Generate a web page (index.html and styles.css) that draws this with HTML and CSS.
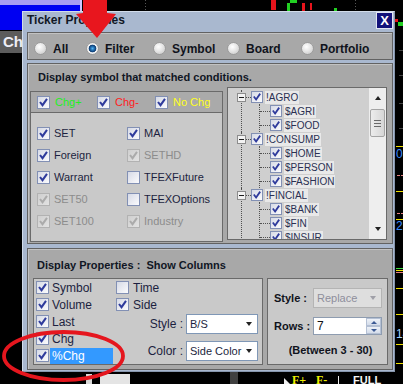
FILE: index.html
```html
<!DOCTYPE html>
<html>
<head>
<meta charset="utf-8">
<title>Ticker Properties</title>
<link rel="stylesheet" href="styles.css">
</head>
<body>
<div class="desk">
  <svg class="bg" width="403" height="384" viewBox="0 0 403 384">
    <rect x="0" y="0" width="81" height="5" fill="#a99cf2"/>
    <rect x="80" y="0" width="2" height="30" fill="#cfc6ff"/>
    <rect x="0" y="5" width="80" height="25" fill="#0000f2"/>
    <rect x="0" y="31" width="22" height="22" fill="#5c5c5c"/>
    <text x="3" y="47" font-family="Liberation Sans, Arial, sans-serif" font-weight="bold" font-size="15" fill="#eeeef6">Ch</text>
    <line x1="145.5" y1="0" x2="145.5" y2="11" stroke="#555" stroke-dasharray="1 2"/>
    <line x1="355.5" y1="0" x2="355.5" y2="11" stroke="#555" stroke-dasharray="1 2"/>
    <rect x="271" y="0" width="5" height="10" fill="#e8141c"/>
    <rect x="287" y="3" width="3" height="8" fill="#22d022"/>
    <rect x="290" y="0" width="7" height="3" fill="#22d022"/>
    <rect x="302" y="3" width="3" height="8" fill="#e8141c"/>
    <rect x="310" y="3" width="2" height="7" fill="#e8141c"/>
    <rect x="334" y="8" width="3" height="3" fill="#22d022"/>
    <rect x="395" y="19" width="3" height="3" fill="#e8141c"/>
    <rect x="398" y="22" width="5" height="4" fill="#22d022"/>
    <g fill="#444">
      <rect x="399" y="50" width="4" height="1"/>
      <rect x="399" y="75" width="4" height="1"/>
      <rect x="399" y="103" width="4" height="1"/>
      <rect x="399" y="128" width="4" height="1"/>
    </g>
    <g fill="#f0e000">
      <rect x="396" y="146" width="7" height="1"/>
      <rect x="396" y="191" width="7" height="1"/>
      <rect x="396" y="219" width="7" height="1"/>
      <rect x="396" y="270" width="7" height="1"/>
      <rect x="396" y="288" width="7" height="1"/>
      <rect x="396" y="314" width="7" height="1"/>
      <rect x="396" y="344" width="7" height="1"/>
      <rect x="396" y="363" width="7" height="1"/>
    </g>
    <g fill="#e88080">
      <rect x="397" y="175" width="3" height="1"/>
      <rect x="401" y="175" width="2" height="1"/>
      <rect x="397" y="213" width="3" height="1"/>
      <rect x="401" y="213" width="2" height="1"/>
      <rect x="396" y="272" width="7" height="1"/>
    </g>
    <rect x="396" y="268" width="7" height="1" fill="#40e040"/>
    <text x="396" y="158" font-family="Liberation Sans, Arial, sans-serif" font-size="12" fill="#3a8cff">0</text>
    <text x="396" y="230" font-family="Liberation Sans, Arial, sans-serif" font-size="12" fill="#3a8cff">2,</text>
    <text x="396" y="338" font-family="Liberation Sans, Arial, sans-serif" font-size="12" fill="#a0d0ff">14</text>
    <rect x="86" y="374" width="6" height="10" fill="#d8d8d8"/>
    <rect x="100" y="374" width="30" height="10" fill="#e4e4e4"/>
    <rect x="230" y="372" width="8" height="12" fill="#404040"/>
    <polygon points="284,378 290,384 284,384" fill="#f0f0f0"/>
    <text x="292" y="384" font-family="Liberation Serif, serif" font-weight="bold" font-size="12" fill="#f0f000">F+</text>
    <text x="316" y="384" font-family="Liberation Serif, serif" font-weight="bold" font-size="12" fill="#f0f000">F-</text>
    <rect x="338" y="376" width="1" height="8" fill="#f0f0f0"/>
    <text x="353" y="384" font-family="Liberation Sans, Arial, sans-serif" font-weight="bold" font-size="11" fill="#f4f4f4">FULL</text>
  </svg>

  <div class="dlg">
    <div class="titlebar">
      <span class="ttl">Ticker Properties</span>
      <span class="close">X</span>
    </div>
    <div class="dbody">
      <div class="grp radios">
        <div class="rad"><span class="rb"></span>All</div>
        <div class="rad"><span class="rb on"></span>Filter</div>
        <div class="rad"><span class="rb"></span>Symbol</div>
        <div class="rad"><span class="rb"></span>Board</div>
        <div class="rad"><span class="rb"></span>Portfolio</div>
      </div>

      <div class="grp g2">
        <div class="gtitle">Display symbol that matched conditions.</div>
        <div class="g2row">
          <div class="lcol">
            <div class="chgbox">
              <div class="ci w60"><span class="cb on"></span><span class="green">Chg+</span></div>
              <div class="ci w58"><span class="cb on"></span><span class="red">Chg-</span></div>
              <div class="ci"><span class="cb on"></span><span class="yellow">No Chg</span></div>
            </div>
            <div class="fbox">
              <div class="fi"><span class="cb on"></span>SET</div>
              <div class="fi"><span class="cb on"></span>MAI</div>
              <div class="fi"><span class="cb on"></span>Foreign</div>
              <div class="fi dis"><span class="cb on"></span>SETHD</div>
              <div class="fi"><span class="cb on"></span>Warrant</div>
              <div class="fi"><span class="cb"></span>TFEXFuture</div>
              <div class="fi dis"><span class="cb on"></span>SET50</div>
              <div class="fi"><span class="cb"></span>TFEXOptions</div>
              <div class="fi dis"><span class="cb on"></span>SET100</div>
              <div class="fi dis"><span class="cb on"></span>Industry</div>
            </div>
          </div>
          <div class="tree">
            <div class="tc">
              <div class="pnode">
                <div class="prow"><span class="exp"></span><span class="hl"></span><span class="cb on"></span><span class="lbl">!AGRO</span></div>
                <div class="kids">
                  <div class="krow"><span class="hl"></span><span class="cb on"></span><span class="lbl">$AGRI</span></div>
                  <div class="krow"><span class="hl"></span><span class="cb on"></span><span class="lbl">$FOOD</span></div>
                </div>
              </div>
              <div class="pnode">
                <div class="prow"><span class="exp"></span><span class="hl"></span><span class="cb on"></span><span class="lbl">!CONSUMP</span></div>
                <div class="kids">
                  <div class="krow"><span class="hl"></span><span class="cb on"></span><span class="lbl">$HOME</span></div>
                  <div class="krow"><span class="hl"></span><span class="cb on"></span><span class="lbl">$PERSON</span></div>
                  <div class="krow"><span class="hl"></span><span class="cb on"></span><span class="lbl">$FASHION</span></div>
                </div>
              </div>
              <div class="pnode">
                <div class="prow"><span class="exp"></span><span class="hl"></span><span class="cb on"></span><span class="lbl">!FINCIAL</span></div>
                <div class="kids">
                  <div class="krow"><span class="hl"></span><span class="cb on"></span><span class="lbl">$BANK</span></div>
                  <div class="krow"><span class="hl"></span><span class="cb on"></span><span class="lbl">$FIN</span></div>
                  <div class="krow"><span class="hl"></span><span class="cb on"></span><span class="lbl">$INSUR</span></div>
                </div>
              </div>
            </div>
            <div class="sbar">
              <div class="sbtn"><span class="tri up"></span></div>
              <div class="thumb"><span class="grip"></span><span class="grip"></span><span class="grip"></span></div>
              <div class="strack"></div>
              <div class="sbtn"><span class="tri down"></span></div>
            </div>
          </div>
        </div>
      </div>

      <div class="grp g3">
        <div class="gtitle">Display Properties :&nbsp;&nbsp;Show Columns</div>
        <div class="g3row">
          <div class="pbox">
            <div class="colA">
              <div class="pi"><span class="cb on"></span><span class="pl">Symbol</span></div>
              <div class="pi"><span class="cb on"></span><span class="pl">Volume</span></div>
              <div class="pi"><span class="cb on"></span><span class="pl">Last</span></div>
              <div class="pi"><span class="cb on"></span><span class="pl">Chg</span></div>
              <div class="pi"><span class="cb on"></span><span class="pl hi">%Chg</span></div>
            </div>
            <div class="colB">
              <div class="pi"><span class="cb"></span><span class="pl2">Time</span></div>
              <div class="pi"><span class="cb on"></span><span class="pl2">Side</span></div>
              <div class="srow first"><span class="flbl">Style :</span><div class="sel"><span class="sv">B/S</span><span class="tri down"></span></div></div>
              <div class="srow second"><span class="flbl">Color :</span><div class="sel"><span class="sv">Side Color</span><span class="tri down"></span></div></div>
            </div>
          </div>
          <div class="sbox">
            <div class="srow2"><span class="slbl">Style :</span><div class="sel dsel"><span class="sv">Replace</span><span class="tri down"></span></div></div>
            <div class="srow2 rows"><span class="slbl">Rows :</span><div class="spin"><span class="sv">7</span><span class="spbtns"><span class="spb"><span class="tri up"></span></span><span class="spb"><span class="tri down"></span></span></span></div></div>
            <div class="between">(Between 3 - 30)</div>
          </div>
        </div>
      </div>
    </div>
  </div>

  <svg class="ann" width="403" height="384" viewBox="0 0 403 384">
    <polygon points="83,0 107,0 107,13 116,14 97,38 76,14 83,13" fill="#e8161e"/>
    <ellipse cx="63.5" cy="356" rx="59.5" ry="24" fill="none" stroke="#e5161e" stroke-width="3.8"/>
  </svg>
</div>
</body>
</html>
```

FILE: styles.css
```css
* { box-sizing: border-box; }
html, body { margin: 0; padding: 0; background: #000; }
body { width: 403px; height: 384px; overflow: hidden; font-family: "Liberation Sans", Arial, sans-serif; }

.desk { position: relative; width: 403px; height: 384px; overflow: hidden; background: #000; }
.bg { position: absolute; left: 0; top: 0; }
.ann { position: absolute; left: 0; top: 0; pointer-events: none; }

/* dialog window */
.dlg {
  position: absolute; left: 22px; top: 11px; width: 373px; height: 361px;
  background: #a9b8cf;
  border: 1px solid; border-color: #d2dcea #8796ad #8796ad #d2dcea;
  display: flex; flex-direction: column;
}
.titlebar { height: 20px; flex: none; display: flex; align-items: flex-start; padding-left: 4px; }
.ttl { font-weight: bold; font-size: 12px; line-height: 16px; color: #111826; }
.close {
  margin-left: auto; margin-right: 1px; width: 17px; height: 17px;
  background: #12127a; border: 1px solid #e2e6f2; color: #fff;
  font-weight: bold; font-size: 13px; line-height: 1;
  display: flex; align-items: center; justify-content: center;
}
.dbody { flex: 1; display: flex; flex-direction: column; padding: 0 1px 0 4px; }

.grp { border: 1px solid #626262; background: #a8a8a8; box-shadow: inset 1px 1px 0 #c2c2c2; flex: none; }

/* radios */
.radios {
  height: 28px; padding: 5px 0 0 6px;
  display: grid; grid-template-columns: 52px 67px 74px 74px auto; align-items: center;
}
.rad { display: flex; align-items: center; gap: 6px; font-weight: bold; font-size: 12px; color: #10131c; }
.rb {
  width: 13px; height: 13px; border-radius: 50%; flex: none;
  border: 1px solid #9c9c9c;
  background: radial-gradient(circle at 40% 35%, #ffffff 0, #e6e6e6 45%, #c2c2c2 100%);
}
.rb.on {
  background: radial-gradient(circle at 50% 50%, #58b8f0 0, #2a7cc0 1.5px, #0c3a70 3.5px, #f4f4f4 4.2px, #d6d6d6 100%);
}

/* checkboxes */
.cb {
  width: 13px; height: 13px; flex: none;
  border: 1px solid #8290b4;
  background: linear-gradient(135deg, #d6dae6, #fbfbfd);
}
.cb.on {
  background-image: url("data:image/svg+xml,%3Csvg xmlns='http://www.w3.org/2000/svg' width='11' height='11' viewBox='0 0 11 11'%3E%3Cpath d='M2 5 L4.5 8.2 L9 1.8' fill='none' stroke='%232f3b9c' stroke-width='2'/%3E%3C/svg%3E"), linear-gradient(135deg, #d6dae6, #fbfbfd);
  background-size: 100% 100%, 100% 100%;
  background-repeat: no-repeat;
}
.dis .cb { border-color: #b2b2b2; background: #d2d2d2; }
.dis .cb.on {
  background-image: url("data:image/svg+xml,%3Csvg xmlns='http://www.w3.org/2000/svg' width='11' height='11' viewBox='0 0 11 11'%3E%3Cpath d='M2 5 L4.5 8.2 L9 1.8' fill='none' stroke='%23ababab' stroke-width='2'/%3E%3C/svg%3E"), linear-gradient(135deg, #cfcfcf, #e2e2e2);
  background-size: 100% 100%, 100% 100%;
}

/* group 2 */
.g2 { height: 181px; margin-top: 3px; display: flex; flex-direction: column; }
.gtitle {
  height: 23px; padding: 3px 0 0 10px; flex: none;
  display: flex; align-items: center;
  font-weight: bold; font-size: 11px; color: #101624;
}
.g2row { display: flex; align-items: flex-start; gap: 4px; padding-left: 2px; }
.lcol { width: 193px; margin-top: 4px; display: flex; flex-direction: column; }
.chgbox {
  height: 22px; border: 1px solid #6a6a6a; background: #aaaaaa;
  display: flex; align-items: center; padding-left: 6px;
}
.ci { display: flex; align-items: center; gap: 5px; font-size: 11px; }
.w60 { width: 60px; }
.w58 { width: 58px; }
.green { color: #22f022; }
.red { color: #ff2020; }
.yellow { color: #ffff20; }

.fbox {
  height: 129px; border: 1px solid #6a6a6a; border-top: 0; background: #c9c9c9;
  padding: 9px 0 0 6px;
  display: grid; grid-template-columns: 90px auto; grid-auto-rows: 22px; align-items: center;
}
.fi { display: flex; align-items: center; gap: 4px; font-size: 11px; color: #1c1f40; }
.fi.dis { color: #8c8c8c; }

/* tree */
.tree {
  width: 160px; height: 153px; border: 1px solid #6a6a6a; background: #cfcfcf;
  display: flex;
}
.tc { flex: 1; padding-top: 2px; overflow: hidden; font-size: 10px; color: #2a3052; }
.pnode { margin-left: 13px; border-left: 1px dotted #505050; }
.prow { height: 14px; display: flex; align-items: center; margin-left: -5px; }
.exp {
  width: 9px; height: 9px; flex: none; border: 1px solid #8c8c8c; background: #f2f2f2;
  display: flex; align-items: center; justify-content: center;
}
.exp::after { content: ""; width: 5px; height: 1px; background: #1a1a1a; }
.hl { width: 5px; flex: none; border-top: 1px dotted #505050; }
.tree .cb { width: 12px; height: 12px; }
.lbl { background: #e9e9e9; padding: 0 1px; margin-left: 2px; line-height: 13px; white-space: nowrap; }
.kids { margin-left: 17px; border-left: 1px dotted #505050; }
.krow { height: 14px; display: flex; align-items: center; }
.krow .hl { width: 10px; }

.sbar { width: 17px; flex: none; background: #eeeeee; display: flex; flex-direction: column; }
.sbtn { height: 20px; flex: none; display: flex; align-items: center; justify-content: center; }
.thumb {
  height: 28px; margin: 1px 1px 0; flex: none;
  border: 1px solid #a4a4a4; border-radius: 2px;
  background: linear-gradient(90deg, #ececec, #d6d6d6);
  display: flex; flex-direction: column; align-items: center; justify-content: center; gap: 2px;
}
.grip { width: 7px; height: 1px; background: #6a6a6a; }
.strack { flex: 1; }

.tri { width: 0; height: 0; border-left: 3.5px solid transparent; border-right: 3.5px solid transparent; }
.tri.up { border-bottom: 4px solid #222; }
.tri.down { border-top: 4px solid #222; }

/* group 3 */
.g3 { height: 122px; margin-top: 4px; display: flex; flex-direction: column; }
.g3 .gtitle { height: 29px; padding: 2px 0 0 9px; }
.g3row { display: flex; gap: 4px; padding-left: 5px; }
.pbox {
  width: 230px; height: 87px; border: 1px solid #6a6a6a; background: #c9c9c9;
  display: flex; padding-left: 2px;
}
.colA { width: 80px; }
.colB { flex: 1; }
.pi { height: 17px; display: flex; align-items: center; font-size: 12px; color: #1c1f40; }
.pl { margin-left: 1px; padding-left: 2px; }
.pl.hi { background: #3399ff; color: #fff; width: 63px; height: 16px; display: flex; align-items: center; }
.pl2 { margin-left: 4px; }
.srow { height: 20px; display: flex; align-items: center; }
.srow.first { margin-top: 1px; }
.srow.second { margin-top: 7px; }
.flbl { width: 70px; padding-right: 3px; text-align: right; font-size: 12px; color: #1c1f40; }
.sel {
  width: 72px; height: 20px; border: 1px solid #7f97b6; background: #fff;
  display: flex; align-items: center; padding: 0 5px 0 3px;
  font-size: 11px; color: #1c1f40;
}
.sv { flex: 1; white-space: nowrap; }
.sbox {
  width: 121px; height: 87px; border: 1px solid #6a6a6a; background: #c9c9c9;
  padding: 9px 0 0 6px;
}
.srow2 { display: flex; align-items: center; height: 20px; }
.srow2.rows { height: 18px; margin-top: 9px; }
.slbl { width: 39px; font-weight: bold; font-size: 11px; color: #10131c; }
.dsel { width: 69px; background: #dedede; border-color: #b4b4b4; color: #8e8e9c; }
.dsel .tri.down { border-top-color: #a0a0a8; }
.spin {
  width: 69px; height: 18px; border: 1px solid #8e9cb0; background: #fff;
  display: flex; align-items: center; padding-left: 3px; font-size: 12px; color: #101010;
}
.spbtns { width: 15px; height: 16px; display: flex; flex-direction: column; }
.spb {
  flex: 1; display: flex; align-items: center; justify-content: center;
  background: linear-gradient(#eef2f8, #d4dcea); border: 1px solid #b4c0d4;
}
.spb .tri.up { border-bottom-color: #3c5a94; border-bottom-width: 3px; }
.spb .tri.down { border-top-color: #3c5a94; border-top-width: 3px; }
.between { margin-top: 8px; line-height: 14px; text-align: center; font-weight: bold; font-size: 11px; color: #10131c; }
```
